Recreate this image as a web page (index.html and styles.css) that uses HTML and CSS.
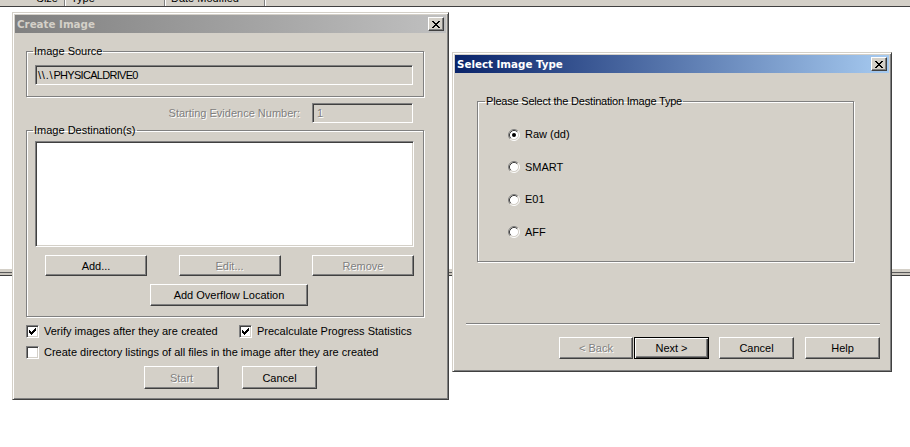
FILE: index.html
```html
<!DOCTYPE html>
<html>
<head>
<meta charset="utf-8">
<link rel="stylesheet" href="styles.css">
</head>
<body>
<div class="listhead">
  <div class="col c1">Size</div>
  <div class="col c2">Type</div>
  <div class="col c3">Date Modified</div>
  <div class="col c4"></div>
</div>
<div class="splitter"></div>

<div class="win win-create">
  <div class="titlebar inactive">
    <span class="title">Create Image</span>
    <div class="close"><svg width="8" height="7" viewBox="0 0 8 7"><path d="M0 0h2v1H0zM6 0h2v1H6zM1 1h2v1H1zM5 1h2v1H5zM2 2h4v1H2zM3 3h2v1H3zM2 4h4v1H2zM1 5h2v1H1zM5 5h2v1H5zM0 6h2v1H0zM6 6h2v1H6z" fill="#000"/></svg></div>
  </div>
  <div class="ci-body">
    <fieldset class="group src">
      <legend>Image Source</legend>
      <div class="field src-field"><span class="slashes">\\.\</span><span class="drive">PHYSICALDRIVE0</span></div>
    </fieldset>
    <div class="evidence-row">
      <span class="dis-text">Starting Evidence Number:</span>
      <div class="field ev-field dis-text">1</div>
    </div>
    <fieldset class="group dest">
      <legend>Image Destination(s)</legend>
      <div class="listbox"></div>
      <div class="btn-row3">
        <div class="btn b-dest">Add...</div>
        <div class="btn b-dest dis">Edit...</div>
        <div class="btn b-dest dis">Remove</div>
      </div>
      <div class="btn b-overflow">Add Overflow Location</div>
    </fieldset>
    <div class="check-row">
      <div class="check first"><span class="cb"><svg width="7" height="7" viewBox="0 0 7 7"><path d="M6 0h1v1H6zM5 1h2v1H5zM0 2h1v1H0zM4 2h3v1H4zM0 3h2v1H0zM3 3h3v1H3zM0 4h5v1H0zM1 5h3v1H1zM2 6h1v1H2z" fill="#000"/></svg></span><span>Verify images after they are created</span></div>
      <div class="check"><span class="cb"><svg width="7" height="7" viewBox="0 0 7 7"><path d="M6 0h1v1H6zM5 1h2v1H5zM0 2h1v1H0zM4 2h3v1H4zM0 3h2v1H0zM3 3h3v1H3zM0 4h5v1H0zM1 5h3v1H1zM2 6h1v1H2z" fill="#000"/></svg></span><span>Precalculate Progress Statistics</span></div>
    </div>
    <div class="check-row row2">
      <div class="check"><span class="cb"></span><span>Create directory listings of all files in the image after they are created</span></div>
    </div>
    <div class="actions">
      <div class="btn b-act dis">Start</div>
      <div class="btn b-act">Cancel</div>
    </div>
  </div>
</div>

<div class="win win-type">
  <div class="titlebar active">
    <span class="title">Select Image Type</span>
    <div class="close"><svg width="8" height="7" viewBox="0 0 8 7"><path d="M0 0h2v1H0zM6 0h2v1H6zM1 1h2v1H1zM5 1h2v1H5zM2 2h4v1H2zM3 3h2v1H3zM2 4h4v1H2zM1 5h2v1H1zM5 5h2v1H5zM0 6h2v1H0zM6 6h2v1H6z" fill="#000"/></svg></div>
  </div>
  <div class="si-body">
    <fieldset class="group types">
      <legend class="tight">Please Select the Destination Image Type</legend>
      <div class="radio-row"><svg class="rb" width="12" height="12" viewBox="0 0 12 12"><circle cx="6" cy="6" r="4.5" fill="#fff"/><path d="M2.11 9.89A5.5 5.5 0 0 1 9.89 2.11" stroke="#808080" fill="none"/><path d="M9.89 2.11A5.5 5.5 0 0 1 2.11 9.89" stroke="#fff" fill="none"/><path d="M2.82 9.18A4.5 4.5 0 0 1 9.18 2.82" stroke="#404040" fill="none"/><path d="M9.18 2.82A4.5 4.5 0 0 1 2.82 9.18" stroke="#d4d0c8" fill="none"/><circle cx="6" cy="6" r="2" fill="#000"/></svg><span>Raw (dd)</span></div>
      <div class="radio-row"><svg class="rb" width="12" height="12" viewBox="0 0 12 12"><circle cx="6" cy="6" r="4.5" fill="#fff"/><path d="M2.11 9.89A5.5 5.5 0 0 1 9.89 2.11" stroke="#808080" fill="none"/><path d="M9.89 2.11A5.5 5.5 0 0 1 2.11 9.89" stroke="#fff" fill="none"/><path d="M2.82 9.18A4.5 4.5 0 0 1 9.18 2.82" stroke="#404040" fill="none"/><path d="M9.18 2.82A4.5 4.5 0 0 1 2.82 9.18" stroke="#d4d0c8" fill="none"/></svg><span>SMART</span></div>
      <div class="radio-row"><svg class="rb" width="12" height="12" viewBox="0 0 12 12"><circle cx="6" cy="6" r="4.5" fill="#fff"/><path d="M2.11 9.89A5.5 5.5 0 0 1 9.89 2.11" stroke="#808080" fill="none"/><path d="M9.89 2.11A5.5 5.5 0 0 1 2.11 9.89" stroke="#fff" fill="none"/><path d="M2.82 9.18A4.5 4.5 0 0 1 9.18 2.82" stroke="#404040" fill="none"/><path d="M9.18 2.82A4.5 4.5 0 0 1 2.82 9.18" stroke="#d4d0c8" fill="none"/></svg><span>E01</span></div>
      <div class="radio-row"><svg class="rb" width="12" height="12" viewBox="0 0 12 12"><circle cx="6" cy="6" r="4.5" fill="#fff"/><path d="M2.11 9.89A5.5 5.5 0 0 1 9.89 2.11" stroke="#808080" fill="none"/><path d="M9.89 2.11A5.5 5.5 0 0 1 2.11 9.89" stroke="#fff" fill="none"/><path d="M2.82 9.18A4.5 4.5 0 0 1 9.18 2.82" stroke="#404040" fill="none"/><path d="M9.18 2.82A4.5 4.5 0 0 1 2.82 9.18" stroke="#d4d0c8" fill="none"/></svg><span>AFF</span></div>
    </fieldset>
    <div class="separator"></div>
    <div class="wiz-buttons">
      <div class="btn b-wiz dis">&lt; Back</div>
      <div class="btn b-wiz def">Next &gt;</div>
      <div class="btn b-wiz gap10">Cancel</div>
      <div class="btn b-wiz gap11">Help</div>
    </div>
  </div>
</div>
</body>
</html>
```

FILE: styles.css
```css
* { box-sizing: border-box; }
html, body { margin: 0; padding: 0; }
body {
  width: 910px;
  height: 447px;
  overflow: hidden;
  position: relative;
  background: #fff;
  font-family: "Liberation Sans", Arial, sans-serif;
  font-size: 11px;
  color: #000;
}

/* background list header (partially visible) */
.listhead {
  display: flex;
  align-items: flex-end;
  height: 7px;
  overflow: hidden;
  background: #d4d0c8;
  border-bottom: 1px solid #404040;
}
.col {
  flex: none;
  height: 14px;
  line-height: 13px;
  padding: 0 5px;
  white-space: nowrap;
  border-left: 1px solid #fff;
  border-right: 1px solid #808080;
}
.c1 { width: 65px; text-align: right; padding-right: 6px; border-left: none; }
.c2 { width: 100px; }
.c3 { width: 100px; }
.c4 { flex: 1; border-right: none; }

.splitter {
  margin-top: 262px;
  height: 7px;
  background: linear-gradient(#d4d0c8 0 3px, #5a5a5a 3px 4px, #c8c4bc 4px 6px, #404040 6px 7px);
}

/* windows */
.win {
  position: absolute;
  display: flex;
  flex-direction: column;
  background: #d4d0c8;
  border: 1px solid;
  border-color: #d4d0c8 #404040 #404040 #d4d0c8;
  box-shadow: inset 1px 1px #fff, inset -1px -1px #808080;
  padding: 2px;
}
.win-create { left: 12px; top: 12px; width: 437px; height: 388px; }
.win-type { left: 452px; top: 52px; width: 440px; height: 320px; }

.titlebar {
  flex: none;
  height: 18px;
  display: flex;
  align-items: center;
  justify-content: space-between;
  padding: 0 2px;
}
.titlebar.inactive { background: linear-gradient(to right, #808080, #c0c0c0); color: #d4d0c8; }
.titlebar.active { background: linear-gradient(to right, #0a246a, #a6caf0); color: #fff; }
.title {
  font-family: "DejaVu Sans", sans-serif;
  font-weight: bold;
  font-size: 10.3px;
  line-height: 18px;
  white-space: nowrap;
}
.close {
  width: 16px;
  height: 14px;
  display: flex;
  align-items: center;
  justify-content: center;
  background: #d4d0c8;
  border: 1px solid;
  border-color: #fff #404040 #404040 #fff;
  box-shadow: inset -1px -1px #808080;
}
.close svg { display: block; }

/* buttons */
.btn {
  flex: none;
  display: flex;
  align-items: center;
  justify-content: center;
  background: #d4d0c8;
  color: #000;
  border: 1px solid;
  border-color: #fff #404040 #404040 #fff;
  box-shadow: inset -1px -1px #808080;
  white-space: nowrap;
}
.btn.dis, .dis-text { color: #808080; text-shadow: 1px 1px 0 #fff; }
.btn.def {
  border-color: #000;
  box-shadow: inset 1px 1px #fff, inset -1px -1px #404040, inset -2px -2px #808080;
}

/* group boxes */
.group {
  margin: 0;
  min-width: 0;
  border: 1px solid #808080;
  box-shadow: inset 1px 1px #fff, 1px 1px #fff;
}
.group legend {
  padding: 0 1px;
  margin-left: -2px;
  line-height: 13px;
  font-size: 11px;
}
.group legend.tight { letter-spacing: -0.2px; margin-left: -23px; }

/* sunken fields */
.field, .listbox, .cb {
  border: 1px solid;
  border-color: #808080 #fff #fff #808080;
  box-shadow: inset 1px 1px #404040, inset -1px -1px #d4d0c8;
}
.field {
  height: 20px;
  background: #d4d0c8;
  line-height: 18px;
  padding: 0 2px;
  white-space: nowrap;
}

/* Create Image body */
.ci-body { padding: 12px 22px 0 11px; }
.src { padding: 7px 10px 11px 8px; }
.src-field { width: 378px; }
.slashes { letter-spacing: 0.8px; }
.drive { letter-spacing: -0.7px; }
.evidence-row {
  margin-top: 6px;
  display: flex;
  justify-content: flex-end;
  align-items: center;
  gap: 12px;
  padding-right: 11px;
  height: 20px;
}
.ev-field { width: 101px; padding-left: 4px; }
.dest { margin-top: 1px; padding: 4px 9px 10px 8px; }
.listbox { width: 379px; height: 106px; background: #fff; }
.btn-row3 {
  margin: 8px 0 0 10px;
  width: 369px;
  display: flex;
  justify-content: space-between;
}
.b-dest { width: 102px; height: 21px; }
.b-overflow { margin: 8px 0 0 115px; width: 158px; height: 22px; }

.check-row { display: flex; margin-top: 8px; height: 13px; }
.check { display: flex; align-items: center; gap: 5px; height: 13px; line-height: 13px; white-space: nowrap; }
.check.first { width: 213px; }
.cb {
  flex: none;
  width: 13px;
  height: 13px;
  background: #fff;
  padding: 2px;
}
.cb svg { display: block; }
.actions { margin: 7px 0 0 118px; display: flex; gap: 23px; }
.b-act { width: 75px; height: 23px; }

/* Select Image Type body */
.si-body { padding: 22px 9px 0 11px; }
.types {
  margin: 0 26px 0 11px;
  padding: 20px 10px 22px 30px;
  display: flex;
  flex-direction: column;
  gap: 19.5px;
}
.radio-row { display: flex; align-items: center; gap: 5px; height: 13px; line-height: 13px; }
.rb { display: block; flex: none; }
.separator {
  margin-top: 61px;
  height: 2px;
  border-top: 1px solid #808080;
  border-bottom: 1px solid #fff;
}
.wiz-buttons { margin-top: 12px; display: flex; justify-content: flex-end; }
.b-wiz { width: 75px; height: 22px; }
.b-wiz.dis { width: 74px; }
.b-wiz.def { margin-left: 1px; }
.gap10 { margin-left: 10px; }
.gap11 { margin-left: 11px; }
```
